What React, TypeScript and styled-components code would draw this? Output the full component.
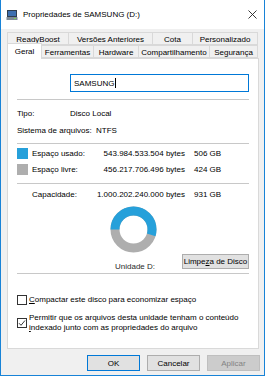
import styled, { createGlobalStyle } from "styled-components";

const GlobalStyle = createGlobalStyle`
  html, body {
    margin: 0;
    padding: 0;
    background: #fff;
  }
  body {
    font-family: "Liberation Sans", Arial, sans-serif;
    font-size: 8px;
    color: #000;
  }
`;

const Window = styled.div`
  width: 265px;
  height: 376px;
  box-sizing: border-box;
  border: 1px solid #1883d7;
  border-top: none;
  display: flex;
  flex-direction: column;
  background: #f0f0f0;
`;

const TitleBar = styled.div`
  height: 29px;
  flex-shrink: 0;
  background: #fff;
  display: flex;
  align-items: center;
  gap: 5px;
  padding: 0 7px 0 5px;
`;

const Title = styled.div`
  flex: 1;
  font-size: 8px;
`;

const Body = styled.div`
  flex: 1;
  display: flex;
  flex-direction: column;
  padding: 3px 5px 0 6px;
`;

const TabRow = styled.div`
  display: flex;
  height: 13px;
  align-items: flex-end;
  padding-left: 1px;
`;

const Tab = styled.div<{ w: number; active?: boolean }>`
  width: ${(p) => p.w}px;
  height: ${(p) => (p.active ? 16 : 13)}px;
  margin-left: -1px;
  margin-bottom: ${(p) => (p.active ? -1 : 0)}px;
  box-sizing: border-box;
  border: 1px solid #d9d9d9;
  border-bottom: ${(p) => (p.active ? "none" : "1px solid #d9d9d9")};
  background: ${(p) => (p.active ? "#fff" : "#f0f0f0")};
  display: flex;
  align-items: center;
  justify-content: center;
  padding-top: ${(p) => (p.active ? 0 : 1)}px;
  position: relative;
  z-index: ${(p) => (p.active ? 2 : 1)};
  white-space: nowrap;
`;

const Panel = styled.div`
  height: 291px;
  box-sizing: border-box;
  border: 1px solid #d9d9d9;
  background: #fff;
  display: flex;
  flex-direction: column;
  padding: 0 9px;
`;

const NameRow = styled.div`
  display: flex;
  margin-top: 15px;
  padding-left: 53px;
`;

const NameInput = styled.div`
  flex: 1;
  height: 18px;
  box-sizing: border-box;
  border: 1px solid #0078d7;
  display: flex;
  align-items: center;
  padding-left: 3px;
`;

const Caret = styled.span`
  display: inline-block;
  width: 1px;
  height: 10px;
  background: #000;
  margin-left: 1px;
`;

const Separator = styled.div<{ mt: number }>`
  height: 1px;
  background: #c8c8c8;
  margin-top: ${(p) => p.mt}px;
`;

const InfoRow = styled.div<{ labelWidth: number; mt?: number }>`
  display: grid;
  grid-template-columns: ${(p) => p.labelWidth}px auto;
  height: 17px;
  align-items: center;
  margin-top: ${(p) => p.mt ?? 0}px;
`;

const SpaceRow = styled.div<{ mt?: number }>`
  display: grid;
  grid-template-columns: 15px 58px 95px 1fr;
  height: 16px;
  align-items: center;
  margin-top: ${(p) => p.mt ?? 0}px;
`;

const Swatch = styled.div<{ color: string }>`
  width: 11px;
  height: 11px;
  background: ${(p) => p.color};
`;

const Bytes = styled.div`
  text-align: right;
`;

const Size = styled.div`
  padding-left: 9px;
`;

const ChartArea = styled.div`
  display: grid;
  grid-template-columns: 1fr auto 1fr;
  margin-top: 4px;
`;

const ChartColumn = styled.div`
  display: flex;
  flex-direction: column;
  align-items: center;
`;

const DriveLabel = styled.div`
  height: 12px;
  line-height: 12px;
  margin-top: 8px;
  padding-left: 4px;
  white-space: nowrap;
  color: #2a2a2a;
`;

const CleanupButton = styled.button`
  justify-self: end;
  align-self: end;
  margin-bottom: 4px;
  width: 67px;
  height: 15px;
  padding: 0;
  box-sizing: border-box;
  border: 1px solid #adadad;
  background: #e1e1e1;
  font-family: inherit;
  font-size: 8px;
  color: #000;
  white-space: nowrap;
`;

const Key = styled.span`
  text-decoration: underline;
`;

const CheckRow = styled.label<{ mt: number }>`
  display: flex;
  align-items: center;
  gap: 2px;
  margin-top: ${(p) => p.mt}px;
  line-height: 10px;
`;

const Box = styled.span`
  width: 10px;
  height: 10px;
  flex-shrink: 0;
  box-sizing: border-box;
  border: 1px solid #333;
  background: #fff;
  display: flex;
  align-items: center;
  justify-content: center;
`;

const ButtonBar = styled.div`
  display: flex;
  justify-content: flex-end;
  gap: 7px;
  margin-top: 6px;
  margin-right: -1px;
`;

const DialogButton = styled.button<{ kind?: "default" | "disabled" }>`
  width: 53px;
  height: 16px;
  padding: 0;
  box-sizing: border-box;
  font-family: inherit;
  font-size: 8px;
  border: 1px solid
    ${(p) =>
      p.kind === "default" ? "#0078d7" : p.kind === "disabled" ? "#bfbfbf" : "#adadad"};
  background: ${(p) => (p.kind === "disabled" ? "#cccccc" : "#e1e1e1")};
  color: ${(p) => (p.kind === "disabled" ? "#838383" : "#000")};
`;

function DriveIcon() {
  return (
    <svg width="12" height="12" viewBox="0 0 12 12">
      <rect x="1" y="1" width="10" height="8" fill="#2f3d4e" />
      <rect x="2" y="2" width="8" height="5" fill="#3d6fb0" />
      <rect x="0.5" y="8" width="11" height="3" fill="#7e8a96" />
      <rect x="8" y="9" width="2" height="1" fill="#7fd34e" />
    </svg>
  );
}

function CloseIcon() {
  return (
    <svg width="9" height="9" viewBox="0 0 9 9">
      <path d="M0.5 0.5 L8.5 8.5 M8.5 0.5 L0.5 8.5" stroke="#222" strokeWidth="0.9" />
    </svg>
  );
}

function UsageDonut({ used }: { used: number }) {
  const r = 18.5;
  const c = 2 * Math.PI * r;
  return (
    <svg width="47" height="47" viewBox="0 0 47 47">
      <g transform="rotate(180 23.5 23.5)">
        <circle cx="23.5" cy="23.5" r={r} fill="none" stroke="#aeaeae" strokeWidth="9" />
        <circle
          cx="23.5"
          cy="23.5"
          r={r}
          fill="none"
          stroke="#26a0da"
          strokeWidth="9"
          strokeDasharray={`${c * used} ${c}`}
        />
      </g>
    </svg>
  );
}

function CheckMark() {
  return (
    <svg width="8" height="8" viewBox="0 0 8 8">
      <path d="M1 4.2 L3 6.3 L7 1.5" fill="none" stroke="#222" strokeWidth="0.9" />
    </svg>
  );
}

const topTabs = [
  { label: "ReadyBoost", w: 62 },
  { label: "Versões Anteriores", w: 85 },
  { label: "Cota", w: 41 },
  { label: "Personalizado", w: 66 },
];

const bottomTabs = [
  { label: "Geral", w: 35, active: true },
  { label: "Ferramentas", w: 53 },
  { label: "Hardware", w: 46 },
  { label: "Compartilhamento", w: 72 },
  { label: "Segurança", w: 49 },
];

export default function App() {
  const usedBytes = 543984533504;
  const totalBytes = 1000202240000;

  return (
    <>
      <GlobalStyle />
      <Window>
        <TitleBar>
          <DriveIcon />
          <Title>Propriedades de SAMSUNG (D:)</Title>
          <CloseIcon />
        </TitleBar>
        <Body>
          <TabRow>
            {topTabs.map((t) => (
              <Tab key={t.label} w={t.w}>
                {t.label}
              </Tab>
            ))}
          </TabRow>
          <TabRow>
            {bottomTabs.map((t) => (
              <Tab key={t.label} w={t.w} active={t.active}>
                {t.label}
              </Tab>
            ))}
          </TabRow>
          <Panel>
            <NameRow>
              <NameInput>
                SAMSUNG
                <Caret />
              </NameInput>
            </NameRow>
            <Separator mt={7} />
            <InfoRow labelWidth={53} mt={5}>
              <div>Tipo:</div>
              <div>Disco Local</div>
            </InfoRow>
            <InfoRow labelWidth={79}>
              <div>Sistema de arquivos:</div>
              <div>NTFS</div>
            </InfoRow>
            <Separator mt={4} />
            <SpaceRow mt={1}>
              <Swatch color="#26a0da" />
              <div>Espaço usado:</div>
              <Bytes>543.984.533.504 bytes</Bytes>
              <Size>506 GB</Size>
            </SpaceRow>
            <SpaceRow>
              <Swatch color="#aeaeae" />
              <div>Espaço livre:</div>
              <Bytes>456.217.706.496 bytes</Bytes>
              <Size>424 GB</Size>
            </SpaceRow>
            <Separator mt={6} />
            <SpaceRow mt={2}>
              <div />
              <div>Capacidade:</div>
              <Bytes>1.000.202.240.000 bytes</Bytes>
              <Size>931 GB</Size>
            </SpaceRow>
            <ChartArea>
              <div />
              <ChartColumn>
                <UsageDonut used={usedBytes / totalBytes} />
                <DriveLabel>Unidade D:</DriveLabel>
              </ChartColumn>
              <CleanupButton>
                Limpe<Key>z</Key>a de Disco
              </CleanupButton>
            </ChartArea>
            <Separator mt={0} />
            <CheckRow mt={21}>
              <Box />
              <span>
                <Key>C</Key>ompactar este disco para economizar espaço
              </span>
            </CheckRow>
            <CheckRow mt={8}>
              <Box>
                <CheckMark />
              </Box>
              <span>
                Permitir que os arquivos desta unidade tenham o conteúdo
                <br />
                <Key>i</Key>ndexado junto com as propriedades do arquivo
              </span>
            </CheckRow>
          </Panel>
          <ButtonBar>
            <DialogButton kind="default">OK</DialogButton>
            <DialogButton>Cancelar</DialogButton>
            <DialogButton kind="disabled">Aplicar</DialogButton>
          </ButtonBar>
        </Body>
      </Window>
    </>
  );
}
